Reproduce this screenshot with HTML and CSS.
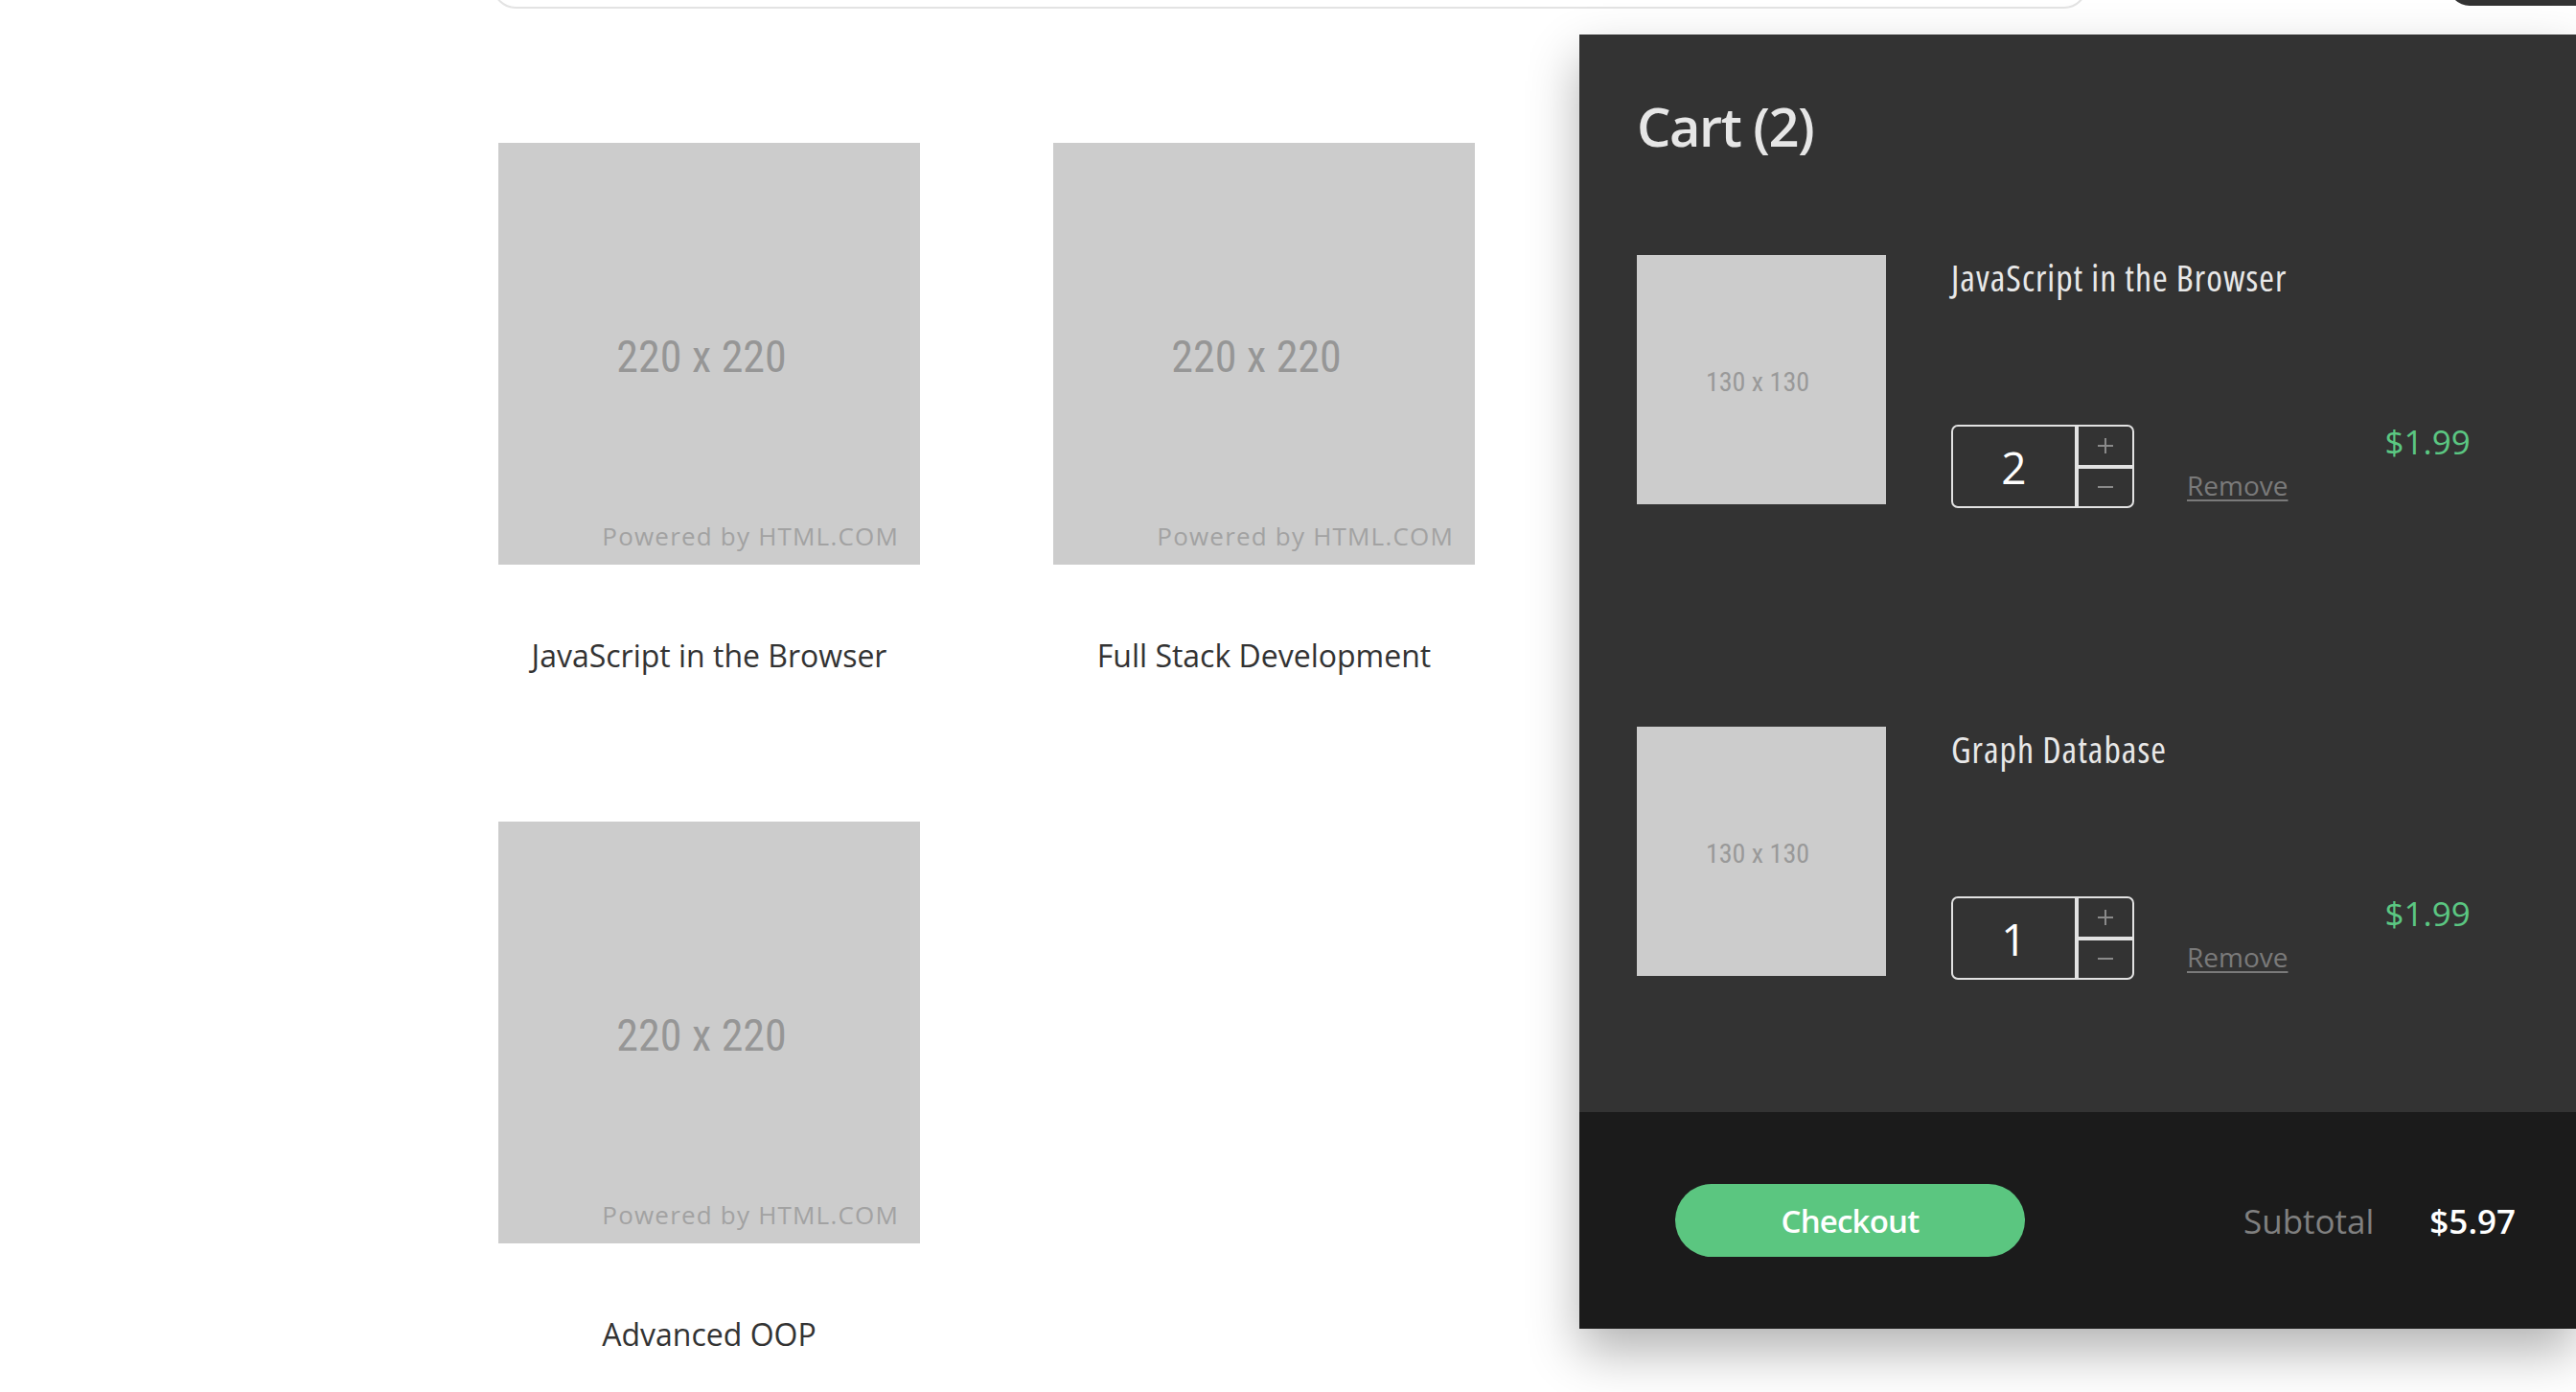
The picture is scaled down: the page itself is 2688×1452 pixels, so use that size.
FILE: index.html
```html
<!DOCTYPE html>
<html lang="en">
<head>
<meta charset="utf-8">
<title>Shop</title>
<link rel="stylesheet" href="styles.css">
</head>
<body>
<header class="topbar">
  <div class="search"></div>
  <div class="account"></div>
</header>

<main class="products">
  <div class="product">
    <div class="ph ph-lg"><span class="ph-size">220 x 220</span><span class="ph-credit">Powered by HTML.COM</span></div>
    <p class="product-title">JavaScript in the Browser</p>
  </div>
  <div class="product">
    <div class="ph ph-lg"><span class="ph-size">220 x 220</span><span class="ph-credit">Powered by HTML.COM</span></div>
    <p class="product-title">Full Stack Development</p>
  </div>
  <div class="product">
    <div class="ph ph-lg"><span class="ph-size">220 x 220</span><span class="ph-credit">Powered by HTML.COM</span></div>
    <p class="product-title">Advanced OOP</p>
  </div>
</main>

<aside class="cart">
  <div class="cart-body">
    <h2 class="cart-title">Cart (2)</h2>
    <ul class="cart-items">
      <li class="cart-item">
        <div class="ph ph-sm"><span class="ph-size-sm">130 x 130</span></div>
        <div class="item-details">
          <div class="item-name">JavaScript in the Browser</div>
          <div class="item-controls">
            <div class="qty">
              <div class="qty-value">2</div>
              <div class="qty-btns">
                <div class="qty-btn qty-plus"><svg width="18" height="18" viewBox="0 0 18 18"><path d="M9 1v16M1 9h16" stroke="#8a8a8a" stroke-width="2" fill="none"/></svg></div>
                <div class="qty-btn"><svg width="18" height="4" viewBox="0 0 18 4"><path d="M1 2h16" stroke="#8a8a8a" stroke-width="2" fill="none"/></svg></div>
              </div>
            </div>
            <a class="remove" href="#">Remove</a>
            <div class="price">$1.99</div>
          </div>
        </div>
      </li>
      <li class="cart-item">
        <div class="ph ph-sm"><span class="ph-size-sm">130 x 130</span></div>
        <div class="item-details">
          <div class="item-name">Graph Database</div>
          <div class="item-controls">
            <div class="qty">
              <div class="qty-value">1</div>
              <div class="qty-btns">
                <div class="qty-btn qty-plus"><svg width="18" height="18" viewBox="0 0 18 18"><path d="M9 1v16M1 9h16" stroke="#8a8a8a" stroke-width="2" fill="none"/></svg></div>
                <div class="qty-btn"><svg width="18" height="4" viewBox="0 0 18 4"><path d="M1 2h16" stroke="#8a8a8a" stroke-width="2" fill="none"/></svg></div>
              </div>
            </div>
            <a class="remove" href="#">Remove</a>
            <div class="price">$1.99</div>
          </div>
        </div>
      </li>
    </ul>
  </div>
  <div class="cart-footer">
    <button class="checkout">Checkout</button>
    <div class="subtotal">
      <span class="subtotal-label">Subtotal</span>
      <span class="subtotal-value">$5.97</span>
    </div>
  </div>
</aside>
</body>
</html>
```

FILE: styles.css
```css
html, body {
  margin: 0;
  padding: 0;
  background: #ffffff;
  font-family: "Open Sans", "Noto Sans", sans-serif;
  overflow: hidden;
}

/* top bar (scrolled, only the bottom edge shows) */
.topbar {
  display: flex;
  align-items: flex-start;
  height: 9px;
}
.search {
  box-sizing: border-box;
  margin-left: 514px;
  margin-top: -31px;
  width: 1664px;
  height: 40px;
  border: 2px solid #e3e3e3;
  border-top: none;
  border-radius: 0 0 24px 24px;
  background: #fff;
}
.account {
  margin-left: auto;
  margin-top: -34px;
  width: 133px;
  height: 40px;
  background: #333;
  border-radius: 0 0 0 22px;
}

/* products grid */
.products {
  display: grid;
  grid-template-columns: repeat(2, 440px);
  column-gap: 139px;
  row-gap: 151px;
  margin: 140px 0 0 520px;
}
.product {
  display: flex;
  flex-direction: column;
  align-items: center;
}
.product-title {
  margin: 73px 0 0;
  font-size: 32px;
  line-height: 44px;
  color: #333;
  text-align: center;
}

/* placeholder images */
.ph {
  position: relative;
  background: #cccccc;
  display: flex;
  align-items: center;
  justify-content: center;
  flex-shrink: 0;
}
.ph-lg { width: 440px; height: 440px; }
.ph-sm { width: 260px; height: 260px; }
.ph-size {
  font-family: "Liberation Sans Narrow", "Roboto Condensed", "DejaVu Sans Condensed", sans-serif;
  font-size: 46px;
  color: #969696;
  margin-right: 16px;
  margin-top: 6px;
}
.ph-size-sm {
  font-family: "Liberation Sans Narrow", "Roboto Condensed", "DejaVu Sans Condensed", sans-serif;
  font-size: 28px;
  color: #999;
  margin-right: 8px;
  margin-top: 4px;
}
.ph-credit {
  position: absolute;
  right: 22px;
  bottom: 12px;
  font-size: 26px;
  letter-spacing: 1.2px;
  color: #a2a2a2;
}

/* cart panel (overlay dropdown) */
.cart {
  position: absolute;
  top: 36px;
  left: 1648px;
  right: 0;
  background: #333333;
  box-shadow: 0 24px 50px rgba(0, 0, 0, 0.3);
  color: #e6e6e6;
}
.cart-body {
  padding: 57px 0 138px 60px;
}
.cart-title {
  margin: 0;
  font-size: 56px;
  font-weight: 600;
  letter-spacing: -1.5px;
  line-height: 76px;
  color: #e6e6e6;
}
.cart-items {
  list-style: none;
  margin: 97px 0 0;
  padding: 0;
  display: flex;
  flex-direction: column;
  gap: 228px;
}
.cart-item {
  display: flex;
  height: 264px;
  gap: 68px;
}
.item-details {
  display: flex;
  flex-direction: column;
}
.item-name {
  font-size: 38px;
  font-stretch: 75%;
  letter-spacing: 1px;
  line-height: 46px;
  color: #e8e8e8;
}
.item-controls {
  margin-top: auto;
  display: flex;
  align-items: flex-start;
}
.qty {
  box-sizing: border-box;
  display: flex;
  width: 191px;
  height: 87px;
  margin-top: 6px;
  border: 2px solid #e2e2e2;
  border-radius: 7px;
}
.qty-value {
  width: 127px;
  border-right: 4px solid #e2e2e2;
  display: flex;
  align-items: center;
  justify-content: center;
  font-size: 46px;
  color: #ffffff;
}
.qty-btns {
  flex: 1;
  display: flex;
  flex-direction: column;
}
.qty-btn {
  flex: 1;
  display: flex;
  align-items: center;
  justify-content: center;
}
.qty-plus {
  border-bottom: 4px solid #e2e2e2;
}
.remove {
  margin: 50px 0 0 55px;
  font-size: 28px;
  line-height: 38px;
  color: #7a7a7a;
  text-decoration: underline;
  text-decoration-thickness: 2px;
  text-underline-offset: 4px;
}
.price {
  margin-left: 101px;
  font-size: 35px;
  line-height: 48px;
  color: #5bc782;
}

/* footer */
.cart-footer {
  height: 226px;
  background: #1b1b1b;
  display: flex;
  align-items: center;
  padding: 0 63px 0 100px;
}
.checkout {
  width: 365px;
  height: 76px;
  border: none;
  border-radius: 38px;
  background: #5bc680;
  color: #ffffff;
  font-family: "Open Sans", sans-serif;
  font-size: 33px;
  font-weight: 600;
  letter-spacing: -0.8px;
  padding: 0;
}
.subtotal {
  margin-left: auto;
  display: flex;
  align-items: baseline;
  gap: 58px;
}
.subtotal-label {
  font-size: 35px;
  color: #808080;
}
.subtotal-value {
  font-size: 35px;
  font-weight: 600;
  color: #ffffff;
}
```
